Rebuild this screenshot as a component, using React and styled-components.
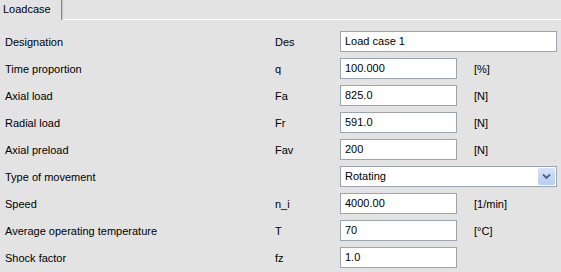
import React from "react";
import styled, { createGlobalStyle } from "styled-components";

const Global = createGlobalStyle`
  html, body { margin: 0; padding: 0; background: #e3e3e3; }
  body { font-family: "Liberation Sans", Arial, sans-serif; font-size: 11px; color: #000; }
`;

const Page = styled.div`
  width: 561px;
  height: 272px;
  background: #e3e3e3;
  overflow: hidden;
`;

const TabBar = styled.div`
  display: flex;
  height: 20px;
`;

const Tab = styled.div`
  width: 62px;
  height: 20px;
  box-sizing: border-box;
  padding: 3px 0 0 3px;
  font-size: 11px;
  border-right: 1px solid #8a8a8a;
  box-shadow: 1px 0 0 #c4c4c4;
`;

const TabRest = styled.div`
  flex: 1;
  border-bottom: 1px solid #ffffff;
  margin-left: 1px;
`;

const Form = styled.div`
  display: flex;
  flex-direction: column;
  gap: 6px;
  padding-top: 11px;
`;

const Row = styled.div`
  display: grid;
  grid-template-columns: 270px 65px auto 1fr;
  align-items: center;
  height: 21px;
`;

const Label = styled.div`
  padding-left: 5px;
`;

const Symbol = styled.div`
  padding-left: 5px;
`;

const Field = styled.div`
  box-sizing: border-box;
  width: ${(p) => (p.$wide ? 217 : 117)}px;
  height: 21px;
  margin-left: 5px;
  background: #fff;
  border: 1px solid #9aa5b1;
  padding: 3px 0 0 4px;
`;

const Unit = styled.div`
  padding-left: 17px;
`;

const Select = styled.div`
  box-sizing: border-box;
  width: 217px;
  height: 21px;
  margin-left: 5px;
  background: #fff;
  border: 1px solid #9aa5b1;
  display: flex;
  align-items: stretch;
`;

const SelectText = styled.div`
  flex: 1;
  padding: 3px 0 0 4px;
`;

const SelectBtn = styled.div`
  width: 17px;
  margin: 1px;
  background: linear-gradient(#d6e2f7, #b7cdf3);
  border-radius: 2px;
  display: flex;
  align-items: center;
  justify-content: center;
`;

const rows = [
  { label: "Designation", sym: "Des", value: "Load case 1", wide: true },
  { label: "Time proportion", sym: "q", value: "100.000", unit: "[%]" },
  { label: "Axial load", sym: "Fa", value: "825.0", unit: "[N]" },
  { label: "Radial load", sym: "Fr", value: "591.0", unit: "[N]" },
  { label: "Axial preload", sym: "Fav", value: "200", unit: "[N]" },
  { label: "Type of movement", sym: "", value: "Rotating", select: true },
  { label: "Speed", sym: "n_i", value: "4000.00", unit: "[1/min]" },
  { label: "Average operating temperature", sym: "T", value: "70", unit: "[°C]" },
  { label: "Shock factor", sym: "fz", value: "1.0" },
];

export default function App() {
  return (
    <Page>
      <Global />
      <TabBar>
        <Tab>Loadcase</Tab>
        <TabRest />
      </TabBar>
      <Form>
        {rows.map((r) => (
          <Row key={r.label}>
            <Label>{r.label}</Label>
            <Symbol>{r.sym}</Symbol>
            {r.select ? (
              <Select>
                <SelectText>{r.value}</SelectText>
                <SelectBtn>
                  <svg width="9" height="7" viewBox="0 0 9 7">
                    <path d="M1 1.5 L4.5 5 L8 1.5" fill="none" stroke="#4d6185" strokeWidth="1.8" />
                  </svg>
                </SelectBtn>
              </Select>
            ) : (
              <Field $wide={r.wide}>{r.value}</Field>
            )}
            <Unit>{r.unit || ""}</Unit>
          </Row>
        ))}
      </Form>
    </Page>
  );
}
